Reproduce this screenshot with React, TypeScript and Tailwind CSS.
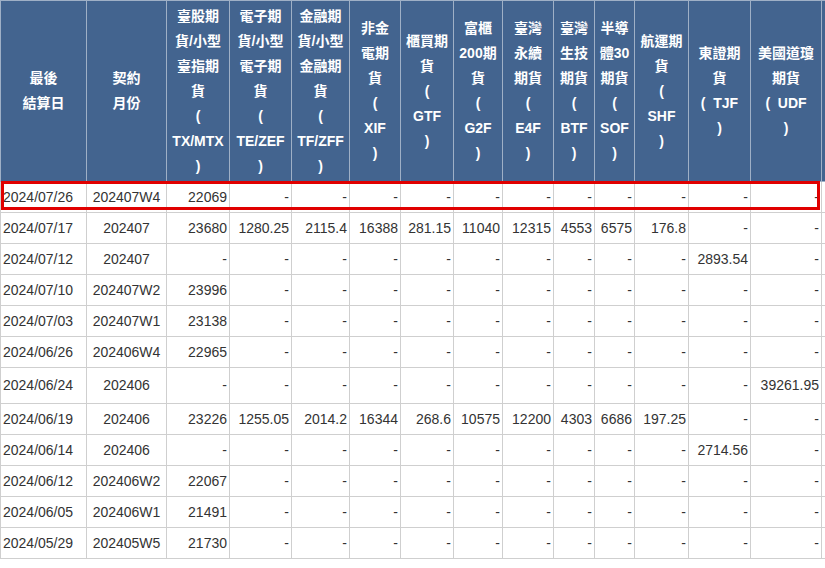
import React from 'react';

const widths = [86, 80, 63, 62, 58, 51, 53, 49, 51, 41, 40, 54, 62, 71, 30];

const headers: string[][] = [
  ['最後', '結算日'],
  ['契約', '月份'],
  ['臺股期', '貨/小型', '臺指期', '貨', '(', 'TX/MTX', ')'],
  ['電子期', '貨/小型', '電子期', '貨', '(', 'TE/ZEF', ')'],
  ['金融期', '貨/小型', '金融期', '貨', '(', 'TF/ZFF', ')'],
  ['非金', '電期', '貨', '(', 'XIF', ')'],
  ['櫃買期', '貨', '(', 'GTF', ')'],
  ['富櫃', '200期', '貨', '(', 'G2F', ')'],
  ['臺灣', '永續', '期貨', '(', 'E4F', ')'],
  ['臺灣', '生技', '期貨', '(', 'BTF', ')'],
  ['半導', '體30', '期貨', '(', 'SOF', ')'],
  ['航運期', '貨', '(', 'SHF', ')'],
  ['東證期', '貨', '(\u00a0\u00a0TJF', ')'],
  ['美國道瓊', '期貨', '(\u00a0\u00a0UDF', ')'],
  [''],
];

const d = '-';
const rows: string[][] = [
  ['2024/07/26', '202407W4', '22069', d, d, d, d, d, d, d, d, d, d, d],
  ['2024/07/17', '202407', '23680', '1280.25', '2115.4', '16388', '281.15', '11040', '12315', '4553', '6575', '176.8', d, d],
  ['2024/07/12', '202407', d, d, d, d, d, d, d, d, d, d, '2893.54', d],
  ['2024/07/10', '202407W2', '23996', d, d, d, d, d, d, d, d, d, d, d],
  ['2024/07/03', '202407W1', '23138', d, d, d, d, d, d, d, d, d, d, d],
  ['2024/06/26', '202406W4', '22965', d, d, d, d, d, d, d, d, d, d, d],
  ['2024/06/24', '202406', d, d, d, d, d, d, d, d, d, d, d, '39261.95'],
  ['2024/06/19', '202406', '23226', '1255.05', '2014.2', '16344', '268.6', '10575', '12200', '4303', '6686', '197.25', d, d],
  ['2024/06/14', '202406', d, d, d, d, d, d, d, d, d, d, '2714.56', d],
  ['2024/06/12', '202406W2', '22067', d, d, d, d, d, d, d, d, d, d, d],
  ['2024/06/05', '202406W1', '21491', d, d, d, d, d, d, d, d, d, d, d],
  ['2024/05/29', '202405W5', '21730', d, d, d, d, d, d, d, d, d, d, d],
];

export default function App() {
  return (
    <div className="relative w-[825px] h-[568px] overflow-hidden bg-white" style={{ fontFamily: '"Liberation Sans", "Noto Sans CJK TC", sans-serif' }}>
      <table className="table-fixed border-collapse w-[851px]">
        <colgroup>
          {widths.map((w, i) => (
            <col key={i} style={{ width: w }} />
          ))}
        </colgroup>
        <thead>
          <tr className="h-[181px]">
            {headers.map((lines, i) => (
              <th key={i} className="bg-[#43648f] text-white font-bold text-[14px] leading-[25px] border border-[#9fb0c6] align-middle text-center p-0">
                {lines.map((l, j) => (
                  <div key={j} className="whitespace-nowrap">{l}</div>
                ))}
              </th>
            ))}
          </tr>
        </thead>
        <tbody>
          {rows.map((r, ri) => (
            <tr key={ri} className={ri === 6 ? 'h-[36px]' : 'h-[31px]'}>
              {r.map((c, ci) => (
                <td
                  key={ci}
                  className={`border border-[#cfcfcf] text-[14px] text-[#333] whitespace-nowrap px-[2px] ${ci === 0 ? 'text-left' : ci === 1 ? 'text-center' : 'text-right'}`}
                >
                  {c}
                </td>
              ))}
              <td className="border border-[#cfcfcf]" />
            </tr>
          ))}
        </tbody>
      </table>
      <div className="absolute left-[1px] top-[181px] w-[819px] h-[29px] border-[3px] border-[#e00000]" />
    </div>
  );
}
